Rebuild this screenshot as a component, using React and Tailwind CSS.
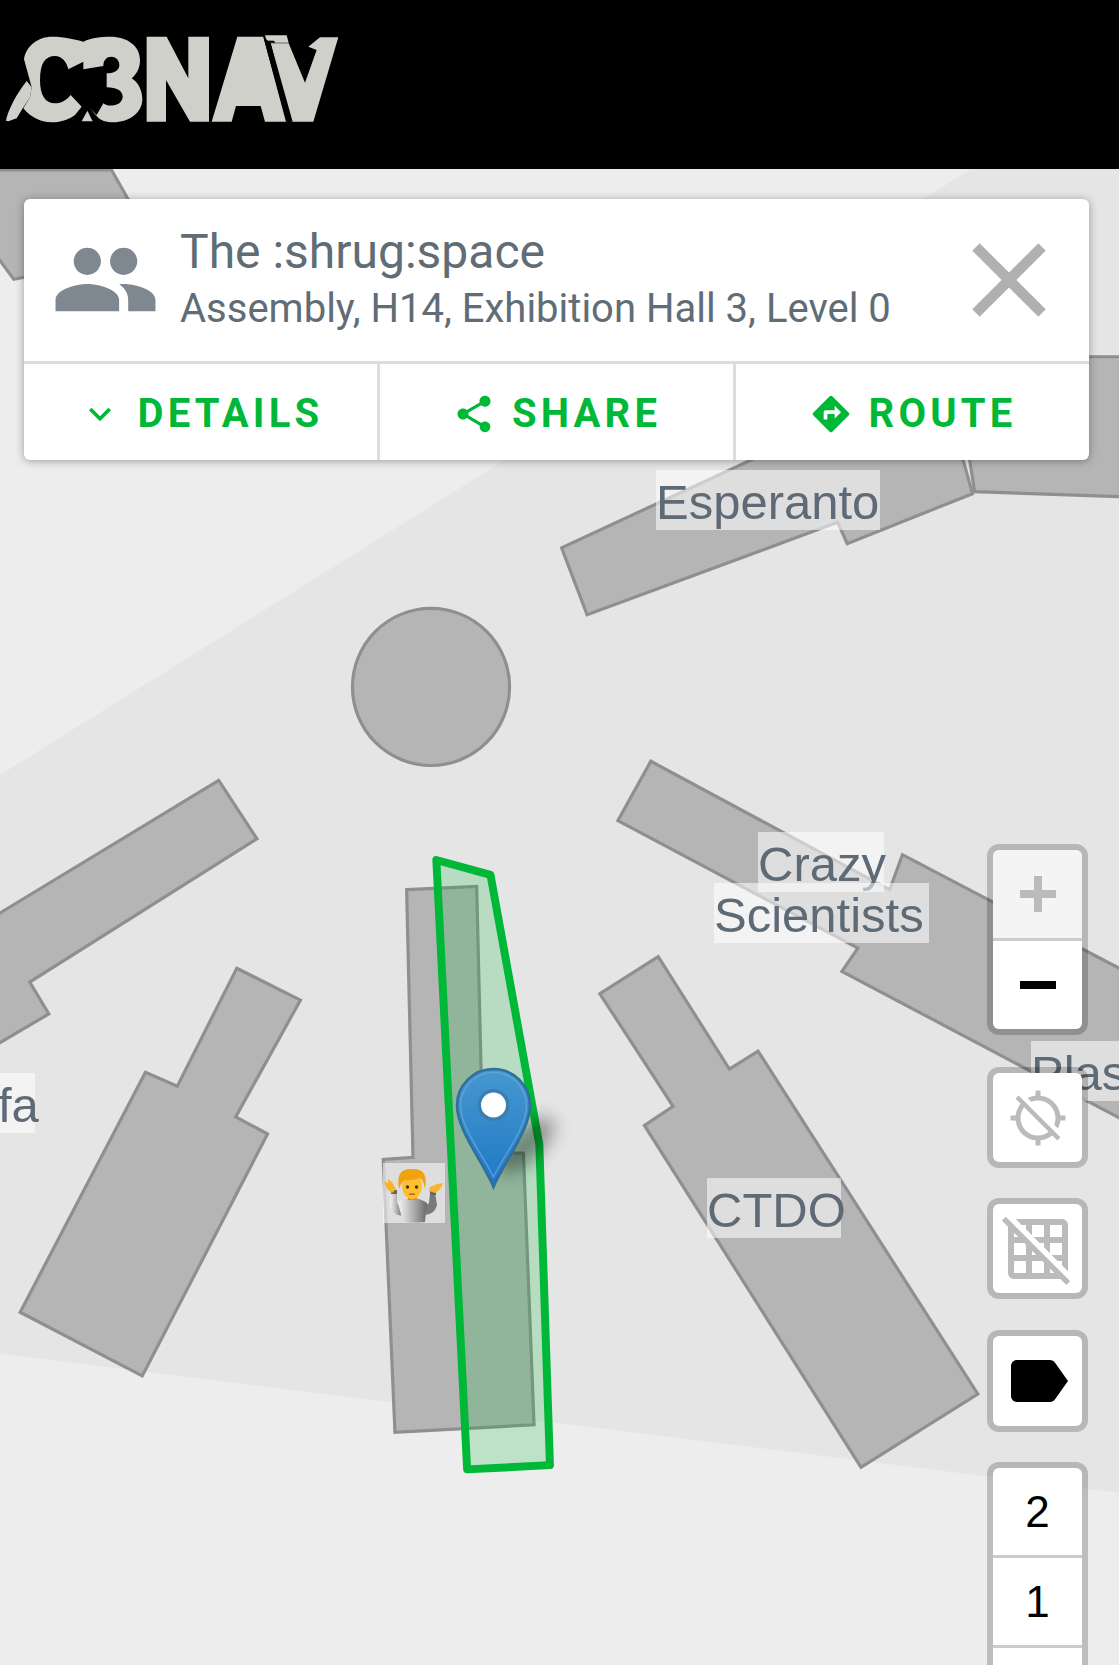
import React from "react";

const buildings = [
  "-10,160 105,160 122,190 130,240 13,263 -10,232",
  "880,336 1060,336 1060,468 918,463 905,380",
  "529,516 553,579 789,492 798,512 916,465 905,425 725,425",
  "-10,866 206,735 242,790 28,925 46,955 -10,988",
  "223,912 283,942 222,1052 252,1068 134,1296 19,1236 137,1010 167,1023",
  "613,717 838,838 850,805 1060,915 1060,1056 793,915 808,893 582,773",
  "620,901 565,936 634,1042 607,1060 811,1382 921,1313 714,990 687,1007",
  "383,838 449,835 455,1086 493,1086 503,1342 372,1349 361,1092 389,1090",
];

function MaterialIcon({ d, size, className, evenodd }) {
  return (
    <svg viewBox="0 0 24 24" width={size} height={size} className={className} fill="currentColor">
      <path d={d} fillRule={evenodd ? "evenodd" : "nonzero"} />
    </svg>
  );
}

const ICONS = {
  group: "M16 11c1.66 0 2.99-1.34 2.99-3S17.66 5 16 5c-1.66 0-3 1.34-3 3s1.34 3 3 3zm-8 0c1.66 0 2.99-1.34 2.99-3S9.66 5 8 5C6.34 5 5 6.34 5 8s1.34 3 3 3zm0 2c-2.33 0-7 1.17-7 3.5V19h14v-2.5c0-2.33-4.67-3.5-7-3.5zm8 0c-.29 0-.62.02-.97.05 1.16.84 1.97 1.97 1.97 3.45V19h6v-2.5c0-2.33-4.67-3.5-7-3.5z",
  close: "M19 6.41L17.59 5 12 10.59 6.41 5 5 6.41 10.59 12 5 17.59 6.41 19 12 13.41 17.59 19 19 17.59 13.41 12z",
  more: "M16.59 8.59L12 13.17 7.41 8.59 6 10l6 6 6-6z",
  share: "M18 16.08c-.76 0-1.44.3-1.96.77L8.91 12.7c.05-.23.09-.46.09-.7s-.04-.47-.09-.7l7.05-4.11c.54.5 1.25.81 2.04.81 1.66 0 3-1.34 3-3s-1.34-3-3-3-3 1.34-3 3c0 .24.04.47.09.7L8.04 9.81C7.5 9.31 6.79 9 6 9c-1.66 0-3 1.34-3 3s1.34 3 3 3c.79 0 1.5-.31 2.04-.81l7.12 4.16c-.05.21-.08.43-.08.65 0 1.61 1.31 2.92 2.92 2.92 1.61 0 2.92-1.31 2.92-2.92s-1.31-2.92-2.92-2.92z",
  route: "M21.71 11.29l-9-9c-.39-.39-1.02-.39-1.41 0l-9 9c-.39.39-.39 1.02 0 1.41l9 9c.39.39 1.02.39 1.41 0l9-9c.39-.38.39-1.01 0-1.41zM14 14.5V12h-4v3H8v-4c0-.55.45-1 1-1h5V7.5l3.5 3.5-3.5 3.5z",
  location: "M20.94 11c-.46-4.17-3.77-7.48-7.94-7.94V1h-2v2.06c-1.13.12-2.19.46-3.16.97l1.5 1.5C10.16 5.19 11.06 5 12 5c3.87 0 7 3.13 7 7 0 .94-.19 1.84-.52 2.65l1.5 1.5c.5-.96.84-2.02.97-3.15H23v-2h-2.06zM3 4.27l2.04 2.04C3.97 7.62 3.26 9.23 3.06 11H1v2h2.06c.46 4.17 3.77 7.48 7.94 7.94V23h2v-2.06c1.77-.2 3.38-.91 4.69-1.98L19.73 21 21 19.73 4.27 3 3 4.27zm13.27 13.27C15.09 18.45 13.61 19 12 19c-3.87 0-7-3.13-7-7 0-1.61.55-3.09 1.46-4.27l9.81 9.81z",
  gridoff: "M8 4v1.45l2 2V4h4v4h-3.45l2 2H14v1.45l2 2V10h4v4h-3.45l2 2H20v1.45l2 2V4c0-1.1-.9-2-2-2H4.55l2 2H8zm8 0h4v4h-4V4zM1.27 1.27L0 2.55l2 2V20c0 1.1.9 2 2 2h15.46l2 2 1.27-1.27L1.27 1.27zM10 12.55L11.45 14H10v-1.45zm-6-6L5.45 8H4V6.55zM8 20H4v-4h4v4zm0-6H4v-4h3.45l.55.55V14zm6 6h-4v-4h3.45l.55.55V20zm2 0v-1.45L17.45 20H16z",
  label: "M17.63 5.84C17.27 5.33 16.67 5 16 5L5 5.01C3.9 5.01 3 5.9 3 7v10c0 1.1.9 1.99 2 1.99L16 19c.67 0 1.27-.33 1.63-.84L22 12l-4.37-6.16z",
};

function Logo() {
  return (
    <svg viewBox="0 0 1080 420" width="360" height="140" fill="#cfd0ca" className="block">
      <path d="M18 362 C22 335 50 280 80 243 L95 262 L90 292 L70 322 L50 355 L25 364Z" />
      <path
        fillRule="evenodd"
        d="M72 178 C78 135 118 110 155 110 C195 110 225 118 250 125 C275 112 305 110 330 110 C385 110 420 140 420 180 C420 205 410 222 395 235 C415 248 427 270 427 298 C427 340 385 367 340 367 C320 367 300 362 290 348 L270 325 L245 320 L225 345 C205 360 180 367 155 367 C120 367 90 350 70 325 L90 292 L95 262 L85 225Z
        M250 185 L205 208 C200 185 185 168 165 168 C135 168 120 190 120 240 C120 285 135 310 165 310 C185 310 200 300 212 285 L245 320 L270 325 L290 345 L310 310 C320 318 332 318 345 315 C360 312 368 300 368 290 C368 272 350 263 320 262 L320 220 C345 220 358 210 358 195 C358 178 345 170 335 170 C320 170 310 180 310 198 L250 208Z"
      />
      <path d="M245 364 L262 332 L278 364Z" />
      <path d="M440 110 H500 L565 235 V110 H627 V365 H570 L498 240 V365 H440Z" />
      <path d="M635 365 L712 110 H790 L860 365 H795 L782 318 H708 L695 365Z" />
      <path d="M795 106 H860 L866 128 H812 L808 122 H800Z" fill="#cfd0ca" />
      <path d="M812 130 L866 130 L915 248 L950 150 L925 140 L960 112 H1015 L940 365 H872Z" />
      <path d="M806 122 H822 L826 128 H812Z M790 110 L812 130 L878 365 H858Z" fill="#000" />
    </svg>
  );
}

function Marker() {
  return (
    <svg
      viewBox="440 1040 150 160"
      width="150"
      height="160"
      className="absolute left-[440px] top-[871px] pointer-events-none"
    >
      <defs>
        <linearGradient id="pin" x1="0" y1="0" x2="0" y2="1">
          <stop offset="0" stopColor="#4798d0" />
          <stop offset="1" stopColor="#1f78c6" />
        </linearGradient>
        <filter id="blur" x="-60%" y="-60%" width="220%" height="220%">
          <feGaussianBlur stdDeviation="9" />
        </filter>
      </defs>
      <ellipse cx="526" cy="1145" rx="36" ry="15" transform="rotate(-45 526 1145)" fill="#000" opacity="0.4" filter="url(#blur)" />
      <path
        d="M493.5 1187 C483 1162 457 1130 457 1105.5 A36.5 36.5 0 0 1 530 1105.5 C530 1130 504 1162 493.5 1187Z"
        fill="url(#pin)"
        stroke="#2f6f9c"
        strokeWidth="2.5"
      />
      <path
        d="M493.5 1177 C484 1157 460.5 1128 460.5 1105.5 A33 33 0 0 1 526.5 1105.5 C526.5 1128 503 1157 493.5 1177Z"
        fill="none"
        stroke="#6aa9d8"
        strokeWidth="1.5"
        opacity="0.7"
      />
      <circle cx="493.5" cy="1105" r="16" fill="#3a7fb0" />
      <circle cx="493.5" cy="1105" r="12.5" fill="#fff" />
    </svg>
  );
}

function Emoji() {
  return (
    <svg viewBox="0 0 62 60" width="62" height="60" className="block">
      <defs>
        <linearGradient id="shirt" x1="0" y1="0" x2="1" y2="0">
          <stop offset="0" stopColor="#f4f4f4" />
          <stop offset="0.55" stopColor="#acacac" />
          <stop offset="1" stopColor="#6a6a6a" />
        </linearGradient>
      </defs>
      <path d="M8 28 L7 42 Q8 52 20 53 L20 44 L14 40 L14 30Z" fill="url(#shirt)" />
      <path d="M52 29 L54 42 Q52 51 42 52 L41 44 L46 40 L47 30Z" fill="#7a7a7a" />
      <path d="M15 40 Q29 30 44 40 L42 59 Q29 60 20 59Z" fill="url(#shirt)" />
      <rect x="8" y="27" width="6" height="4" fill="#666" />
      <rect x="47" y="28" width="6" height="4" fill="#666" />
      <path d="M1 18 L5 20 L5 16 L9 19 L13 26 L9 30 Q3 27 1 18Z" fill="#f7b42c" />
      <path d="M60 20 L54 21 L47 24 L46 28 L52 30 Q58 27 60 20Z" fill="#f7b42c" />
      <rect x="25" y="30" width="9" height="7" fill="#e09412" />
      <ellipse cx="29" cy="23" rx="10" ry="13" fill="#fdbf2d" />
      <path d="M16 26 Q12 5 29 6 Q46 5 42 26 Q41 18 37 15 Q27 18 21 17 Q18 20 16 26Z" fill="#f0a30f" />
      <circle cx="24.5" cy="24" r="1.7" fill="#4a2c0b" />
      <circle cx="33.5" cy="24" r="1.7" fill="#4a2c0b" />
      <rect x="26" y="30.5" width="6" height="1.3" fill="#a8560f" />
    </svg>
  );
}

function Btn({ icon, children, last }) {
  return (
    <button className={`flex-1 flex items-center justify-center pt-[4px] text-[#00b837] ${last ? "" : "border-r-[3px] border-[#dddddd]"}`}>
      <MaterialIcon d={icon} size={44} evenodd />
      <span className="ml-[16px] text-[40px] font-bold tracking-[4.2px] leading-none">{children}</span>
    </button>
  );
}

function CtlBox({ children, className = "" }) {
  return (
    <div className={`w-[101px] rounded-[12px] border-[6px] border-black/20 bg-clip-padding overflow-hidden ${className}`}>{children}</div>
  );
}

function MapLabel({ className, children }) {
  return (
    <div className={`absolute h-[60px] leading-[64px] bg-white/55 text-[49px] text-[#5e6a76] whitespace-nowrap font-['Liberation_Sans',sans-serif] ${className}`}>{children}</div>
  );
}

export default function App() {
  return (
    <div className="relative w-[1119px] h-[1665px] overflow-hidden flex flex-col bg-[#ededed] font-['Roboto',sans-serif]">
      <header className="h-[169px] shrink-0 bg-black">
        <Logo />
      </header>

      <main className="relative flex-1 pt-[30px] px-[24px] pr-[30px]">
        <svg viewBox="0 159.2 1054 1409" className="absolute left-0 top-0 w-[1119px] h-[1496px]">
          <rect x="0" y="159" width="1054" height="1409" fill="#ededed" />
          <polygon points="0,730 915,159 1054,159 1054,1406 0,1275" fill="#e5e5e5" />
          {buildings.map((p) => (
            <polygon key={p} points={p} fill="#b5b5b5" stroke="#8f8f8f" strokeWidth="3" />
          ))}
          <circle cx="406" cy="647" r="74" fill="#b5b5b5" stroke="#8f8f8f" strokeWidth="3" />
          <polygon
            points="411,810 462,824 508,1078 518,1380 440,1384"
            fill="#00b837"
            fillOpacity="0.2"
            stroke="#00b837"
            strokeWidth="7.5"
            strokeLinejoin="round"
          />
        </svg>

        <MapLabel className="left-[656px] top-[301px] w-[224px]">Esperanto</MapLabel>
        <MapLabel className="left-[758px] top-[663px] w-[126px]">Crazy</MapLabel>
        <MapLabel className="left-[714px] top-[714px] w-[215px]">Scientists</MapLabel>
        <MapLabel className="left-[707px] top-[1009px] w-[134px]">CTDO</MapLabel>
        <MapLabel className="left-0 top-[904px] w-[35px] -indent-[2px]">fa</MapLabel>
        <MapLabel className="left-[1031px] top-[872px] w-[120px]">Plas</MapLabel>
        <div className="absolute left-[383px] top-[994px] bg-white/55">
          <Emoji />
        </div>
        <Marker />

        <section className="relative flex flex-col w-[1065px] h-[261px] bg-white rounded-[6px] shadow-[0_1px_8px_rgba(0,0,0,0.35)]">
          <div className="h-[162px] shrink-0 flex items-start relative">
            <MaterialIcon d={ICONS.group} size={109} className="ml-[27px] mt-[26px] shrink-0 text-[#7f8790]" />
            <div className="ml-[20px] text-[#606c76]">
              <div className="mt-[25px] text-[48px] leading-[56px]">The :shrug:space</div>
              <div className="text-[40px] leading-[46px] mt-[6px]">Assembly, H14, Exhibition Hall 3, Level 0</div>
            </div>
            <MaterialIcon d={ICONS.close} size={126} className="absolute left-[922px] top-[18px] text-[#b0b0b0]" />
          </div>
          <div className="h-[3px] bg-[#dddddd] shrink-0" />
          <div className="flex-1 flex">
            <Btn icon={ICONS.more}>DETAILS</Btn>
            <Btn icon={ICONS.share}>SHARE</Btn>
            <Btn icon={ICONS.route} last>ROUTE</Btn>
          </div>
        </section>

        <aside className="absolute left-[987px] top-[675px] flex flex-col">
          <CtlBox className="h-[191px] flex flex-col">
            <div className="h-[88px] bg-[#f4f4f4] flex items-center justify-center shrink-0">
              <svg width="36" height="36" viewBox="0 0 36 36" fill="#bbbbbb">
                <rect x="0" y="14" width="36" height="8" />
                <rect x="14" y="0" width="8" height="36" />
              </svg>
            </div>
            <div className="h-[3px] bg-[#cccccc] shrink-0" />
            <div className="flex-1 bg-white flex items-center justify-center">
              <div className="w-[36px] h-[8px] bg-black" />
            </div>
          </CtlBox>
          <CtlBox className="h-[101px] mt-[32px] bg-white flex items-center justify-center">
            <MaterialIcon d={ICONS.location} size={60} className="text-[#bbbbbb]" />
          </CtlBox>
          <CtlBox className="h-[101px] mt-[30px] bg-white flex items-center justify-center">
            <MaterialIcon d={ICONS.gridoff} size={72} className="text-[#bbbbbb]" />
          </CtlBox>
          <CtlBox className="h-[102px] mt-[31px] bg-white flex items-center justify-center">
            <MaterialIcon d={ICONS.label} size={72} className="text-black" />
          </CtlBox>
          <CtlBox className="h-[300px] mt-[30px] bg-white flex flex-col rounded-b-none font-['Liberation_Sans',sans-serif] text-[44px] text-black">
            <div className="h-[87px] shrink-0 flex items-center justify-center">2</div>
            <div className="h-[3px] bg-[#cccccc] shrink-0" />
            <div className="h-[87px] shrink-0 flex items-center justify-center">1</div>
            <div className="h-[3px] bg-[#cccccc] shrink-0" />
          </CtlBox>
        </aside>
      </main>
    </div>
  );
}
